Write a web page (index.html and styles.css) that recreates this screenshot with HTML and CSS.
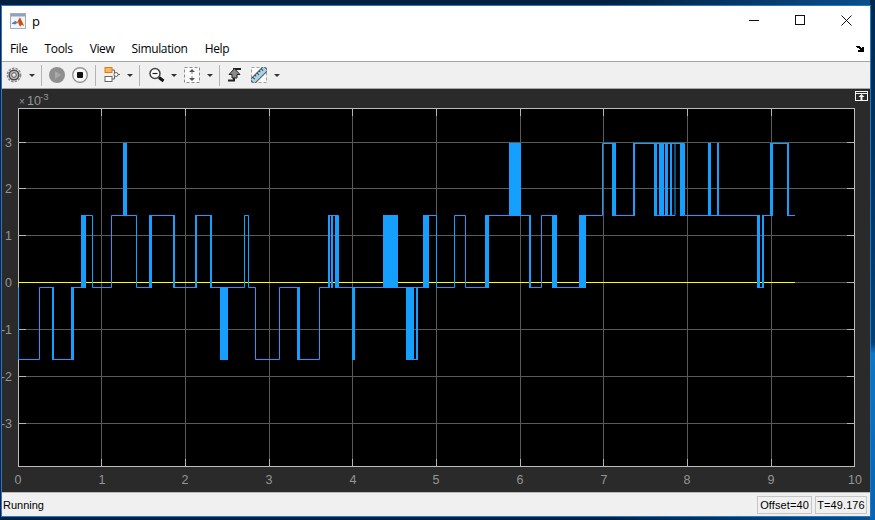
FILE: index.html
```html
<!DOCTYPE html>
<html lang="en">
<head>
<meta charset="utf-8">
<title>p</title>
<link rel="stylesheet" href="styles.css">
</head>
<body>
<div class="window">
  <header class="titlebar">
    <svg class="logo" width="16" height="16" viewBox="0 0 16 16">
      <rect x=".5" y=".5" width="15" height="15" fill="#f2f4f6" stroke="#a4acb5"/>
      <rect x="1" y="1" width="14" height="2.500" fill="#8ba5c1"/>
      <path d="M1.500 10.500 5.500 8 7 9.200 10 4.500l4 8.500-2.200-1.600-1.800 2-1.800-3.400-2.400.7z" fill="#ec7a2c"/>
      <path d="M1.500 10.500 5.500 8 7 9.200l-1.800 2.400z" fill="#2f86cf"/>
      <path d="M10 4.500 8.200 8 10 13.400l1.800-2L14 13z" fill="#cf4a1e"/>
    </svg>
    <span class="title">p</span>
    <div class="controls">
      <button class="control"><svg width="10" height="10" viewBox="0 0 10 10"><path class="glyph" d="M0 5.500h10"/></svg></button>
      <button class="control"><svg width="10" height="10" viewBox="0 0 10 10"><rect class="glyph" x=".5" y=".5" width="9" height="9"/></svg></button>
      <button class="control"><svg width="11" height="11" viewBox="0 0 11 11"><path class="glyph" d="M.5.5l10 10M10.500.5l-10 10"/></svg></button>
    </div>
  </header>

  <nav class="menubar">
    <span class="menu">File</span>
    <span class="menu">Tools</span>
    <span class="menu">View</span>
    <span class="menu">Simulation</span>
    <span class="menu">Help</span>
    <svg class="grip" width="8" height="6" viewBox="0 0 8 6"><path d="M0 0h4v1h1v1h1V1h2v5H2V4h2V3H3V2H1V1H0z"/></svg>
  </nav>

  <div class="toolbar">
    <svg class="tool first" width="16" height="16" viewBox="0 0 16 16">
      <circle cx="8" cy="8" r="6.600" fill="none" stroke="#8a8a8a" stroke-width="1.600" stroke-dasharray="2.400 1.200"/>
      <circle cx="8" cy="8" r="4.800" fill="#bdbdbd" stroke="#4a4a4a" stroke-width="1.500"/>
      <circle cx="8" cy="8" r="2.300" fill="#ececec" stroke="#555"/>
    </svg>
    <span class="caret"></span>
    <span class="sep narrow"></span>
    <svg class="tool" width="16" height="16" viewBox="0 0 16 16">
      <circle cx="8" cy="8" r="8" fill="#8f8f8f"/>
      <path d="M6 4l6 4-6 4z" fill="#a9a9a9"/>
    </svg>
    <svg class="tool" width="16" height="16" viewBox="0 0 16 16">
      <circle cx="8" cy="8" r="7.300" fill="#f7f7f7" stroke="#969696" stroke-width="1.400"/>
      <rect x="5" y="5" width="6" height="6" rx="1" fill="#111"/>
    </svg>
    <span class="sep"></span>
    <svg class="tool wide" width="16" height="16" viewBox="0 0 16 16">
      <rect x="1" y=".5" width="7" height="5" fill="#f9b65a" stroke="#e07c12"/>
      <rect x="1" y="9.500" width="7" height="5" fill="#fff" stroke="#666"/>
      <circle cx="12" cy="7.500" r="2" fill="#fff" stroke="#666"/>
      <path d="M8 3h2.500v3M8 12h2.500V9M14 7.500h2" fill="none" stroke="#666"/>
    </svg>
    <span class="caret"></span>
    <span class="sep narrow"></span>
    <svg class="tool widest" width="16" height="16" viewBox="0 0 16 16">
      <path d="M10 10.500l4.500 3.500" stroke="#111" stroke-width="3"/>
      <circle cx="6" cy="6.500" r="5" fill="#fff" stroke="#444" stroke-width="1.500"/>
      <path d="M3.500 6.500h5" stroke="#222" stroke-width="1.200"/>
    </svg>
    <span class="caret narrow"></span>
    <svg class="tool" width="16" height="16" viewBox="0 0 16 16">
      <rect x=".5" y=".5" width="15" height="15" fill="#fbfbfb" stroke="#8a8a8a" stroke-dasharray="3 2"/>
      <path d="M8 2l3 3H5zM8 14l3-3H5z" fill="#555"/>
      <path d="M8 5v2M8 9v2" stroke="#888"/>
    </svg>
    <span class="caret"></span>
    <span class="sep narrow"></span>
    <svg class="tool" width="16" height="16" viewBox="0 0 16 16">
      <path d="M1 13.500H7V2H14" fill="none" stroke="#222" stroke-width="2"/>
      <path d="M7.500 1.500L13 7.500H10V11H5V7.500H2z" fill="#8a8a8a" stroke="#222"/>
    </svg>
    <svg class="tool wide" width="16" height="16" viewBox="0 0 16 16">
      <rect x=".5" y=".5" width="15" height="15" fill="#fbfbfb" stroke="#a0a0a0" stroke-dasharray="3 2"/>
      <g transform="rotate(-45 8 8)">
        <rect x="-1.500" y="5" width="19" height="6" fill="#a6d6ee" stroke="#555"/>
        <path d="M2 5v3M5 5v2M8 5v3M11 5v2M14 5v3" stroke="#3a3a3a"/>
      </g>
    </svg>
    <span class="caret"></span>
  </div>

  <main class="plotarea">
    <svg class="scope" width="868" height="403" viewBox="2 89 868 403">
      <rect class="axes" x="18" y="108" width="837" height="359"/>
      <path class="grid" d="M101.500 109V466M185.500 109V466M269.500 109V466M352.500 109V466M436.500 109V466M520.500 109V466M603.500 109V466M687.500 109V466M771.500 109V466M19 142.500H854M19 188.500H854M19 235.500H854M19 282.500H854M19 329.500H854M19 376.500H854M19 423.500H854"/>
      <path class="ticks" d="M101.500 109v7M185.500 109v7M269.500 109v7M352.500 109v7M436.500 109v7M520.500 109v7M603.500 109v7M687.500 109v7M771.500 109v7M101.500 466v-7M185.500 466v-7M269.500 466v-7M352.500 466v-7M436.500 466v-7M520.500 466v-7M603.500 466v-7M687.500 466v-7M771.500 466v-7M19 142.500h7M19 188.500h7M19 235.500h7M19 282.500h7M19 329.500h7M19 376.500h7M19 423.500h7M854 142.500h-7M854 188.500h-7M854 235.500h-7M854 282.500h-7M854 329.500h-7M854 376.500h-7M854 423.500h-7"/>
      <rect class="frame" x="18.500" y="108.500" width="836" height="358"/>
      <path class="yellow" d="M18 282.500H795"/>
      <path class="trace" d="M18.500 287.500V359.500H39.500V287.500H52.500V359.500H72.500V287.500H81.500V215.500H92.500V287.500H111.500V215.500H136.500V287.500H149.500V215.500H174.500V287.500H195.500V215.500H210.500V287.500H244.500V215.500H248.500V287.500H255.500V359.500H279.500V287.500H297.500V359.500H319.500V287.500H328.500V215.500H338.500V287.500H352.500M338.500 287.500H383.500M398 287.500H417.500V359.500H406M417.500 287.500H423.500V215.500H436.500V287.500H454.500V215.500H465.500V287.500H485.500V215.500H529.500V287.500H541.500V215.500H552.500V287.500H580M586 215.500H602.500V143.500H612.500M616 215.500H633.500V143.500H684.500V215.500H708.500M654 215.500H675V143.500M711 215.500H757.500M764 215.500H770.500V143.500H787.500V215.500H795M763 215.500V287.500H758M717.500 215.500V143.500"/>
      <path class="blocks" d="M52 287h2v73h-2zM71 287h3v73h-3zM220 287h8v73h-8zM297 287h3v73h-3zM352 287h3v73h-3zM406 287h8v73h-8zM416 287h2v73h-2zM81 215h5v73h-5zM149 215h3v73h-3zM173 215h2v73h-2zM195 215h2v73h-2zM210 215h2v73h-2zM328 215h2v73h-2zM331 215h2v73h-2zM335 215h3v73h-3zM383 215h15v73h-15zM423 215h6v73h-6zM485 215h4v73h-4zM529 215h2v73h-2zM552 215h5v73h-5zM579 215h7v73h-7zM757 215h3v73h-3zM762 215h2v73h-2zM123 143h4v73h-4zM509 143h12v73h-12zM612 143h4v73h-4zM633 143h2v73h-2zM654 143h3v73h-3zM659 143h5v73h-5zM665 143h3v73h-3zM670 143h2v73h-2zM680 143h4v73h-4zM708 143h3v73h-3zM717 143h2v73h-2zM770 143h3v73h-3zM787 143h2v73h-2z"/>
      <g class="ylabels">
        <text x="12" y="147">3</text>
        <text x="12" y="193">2</text>
        <text x="12" y="240">1</text>
        <text x="12" y="287">0</text>
        <text x="12" y="334">-1</text>
        <text x="12" y="381">-2</text>
        <text x="12" y="428">-3</text>
      </g>
      <g class="xlabels">
        <text x="18" y="484">0</text>
        <text x="102" y="484">1</text>
        <text x="185" y="484">2</text>
        <text x="269" y="484">3</text>
        <text x="353" y="484">4</text>
        <text x="436" y="484">5</text>
        <text x="520" y="484">6</text>
        <text x="604" y="484">7</text>
        <text x="687" y="484">8</text>
        <text x="771" y="484">9</text>
        <text x="855" y="484">10</text>
      </g>
      <text class="exp" x="19" y="105">×</text>
      <text class="exp-base" x="27" y="105">10</text>
      <text class="exp-pow" x="40" y="100">-3</text>
      <g class="undock">
        <rect x="855.500" y="91.500" width="12" height="9"/>
        <path d="M856 93.500h11"/>
        <path class="arrow" d="M861.500 94l3 3h-2v3h-2v-3h-2z"/>
      </g>
    </svg>
  </main>

  <footer class="statusbar">
    <span class="status">Running</span>
    <span class="field offset">Offset=40</span>
    <span class="field time">T=49.176</span>
  </footer>
</div>
</body>
</html>
```

FILE: styles.css
```css
* { box-sizing: border-box; }

html, body { margin: 0; height: 520px; overflow: hidden; }

body {
  background-color: #03213f;
  background-image:
    linear-gradient(180deg, #03284c 0, #063f75 66%, #0a78c8 68%, #0963b0 100%),
    linear-gradient(90deg, #03213f 0, #03213f 70%, #0a4f8c 100%);
  background-size: 5px 100%, 100% 100%;
  background-position: right top, left top;
  background-repeat: no-repeat;
  padding: 5px 0 0 1px;
}

.window {
  width: 870px;
  height: 512px;
  border: 1px solid #1a7ccb;
  display: flex;
  flex-direction: column;
  background: #fff;
  font-family: "Liberation Sans", Arial, sans-serif;
}

.titlebar {
  height: 30px;
  display: flex;
  align-items: center;
  padding-left: 8px;
}

.logo { display: block; }

.title {
  margin-left: 6px;
  font: 13px "Open Sans", sans-serif;
  color: #000;
}

.controls { margin-left: auto; display: flex; align-self: flex-start; padding: 9px 1px 0 0; }

.control {
  width: 46px;
  height: 11px;
  padding: 0;
  border: 0;
  background: none;
  display: flex;
  justify-content: center;
  align-items: flex-start;
}

.glyph { fill: none; stroke: #111; stroke-width: 1; }

.menubar {
  height: 26px;
  display: flex;
  align-items: center;
  padding: 0 6px 0 8px;
  gap: 17px;
  border-bottom: 1px solid #a5a5a5;
  font: 12px "Open Sans", sans-serif;
  letter-spacing: -.35px;
  color: #000;
}

.grip { margin-left: auto; display: block; }

.toolbar {
  height: 27px;
  display: flex;
  align-items: center;
  background: #f0f0f0;
  border-bottom: 1px solid #a5a5a5;
}

.tool { display: block; margin-left: 7px; flex: none; }
.tool.first { margin-left: 4px; }
.tool.wide { margin-left: 8px; }
.tool.widest { margin-left: 9px; }

.caret {
  margin-left: 7px;
  width: 0;
  height: 0;
  border-left: 3px solid transparent;
  border-right: 3px solid transparent;
  border-top: 3px solid #333;
  flex: none;
}
.caret.narrow { margin-left: 6px; }

.sep {
  margin-left: 7px;
  width: 1px;
  height: 21px;
  background: #b4b4b4;
  flex: none;
}
.sep.narrow { margin-left: 6px; }

.plotarea {
  height: 404px;
  background: #2a2a2a;
  border-bottom: 1px solid #b9b9b9;
}

.scope { display: block; }

.axes { fill: #000; }
.grid { fill: none; stroke: #5a5a5a; stroke-width: 1; }
.ticks { fill: none; stroke: #b5b5b5; stroke-width: 1; }
.frame { fill: none; stroke: #bdbdbd; stroke-width: 1; }
.yellow { fill: none; stroke: #ffff00; stroke-width: 1; }
.trace { fill: none; stroke: #15a0ff; stroke-width: 1; }
.blocks { fill: #15a0ff; }

.ylabels text, .xlabels text, .exp, .exp-base, .exp-pow {
  font-family: "Liberation Sans", Arial, sans-serif;
  fill: #959595;
}
.ylabels text { font-size: 12.500px; text-anchor: end; }
.xlabels text { font-size: 12.500px; text-anchor: middle; }
.exp { font-size: 10px; }
.exp-base { font-size: 12.500px; }
.exp-pow { font-size: 9.500px; }

.undock rect, .undock path { fill: none; stroke: #f4f4f4; stroke-width: 1; }
.undock .arrow { fill: #f4f4f4; stroke: none; }

.statusbar {
  flex: 1;
  display: flex;
  align-items: center;
  background: #f0f0f0;
  font-size: 11px;
  color: #000;
  padding: 0 3px 0 1px;
}

.status { margin-right: auto; }

.field {
  height: 18px;
  display: flex;
  align-items: center;
  justify-content: center;
  border: 1px solid #c6c6c6;
  letter-spacing: .1px;
}
.offset { width: 55px; }
.time { width: 52px; margin-left: 3px; }
```
